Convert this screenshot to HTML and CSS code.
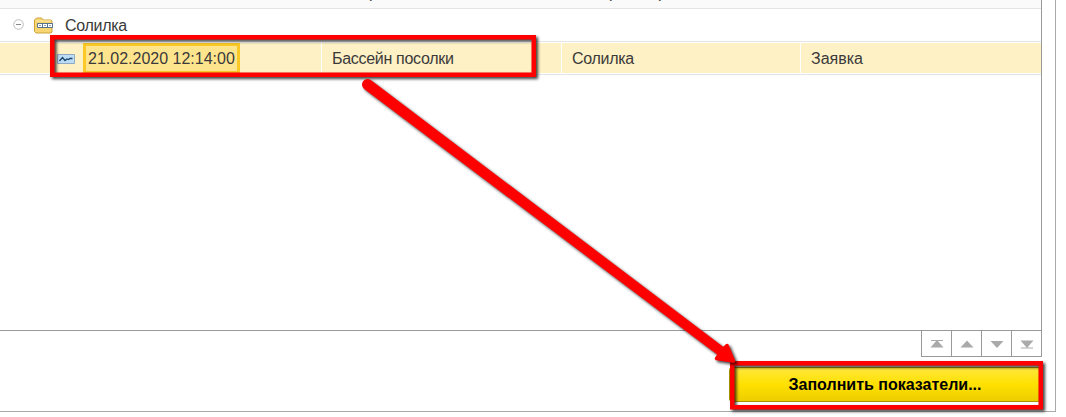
FILE: index.html
```html
<!DOCTYPE html>
<html lang="ru">
<head>
<meta charset="utf-8">
<title>Показатели</title>
<link rel="stylesheet" href="styles.css">
</head>
<body>
<div class="window">
  <div class="table">
    <div class="header"><span></span><span class="h1">р</span><span class="h2">р<i></i>р</span><span></span></div>
    <div class="group">
      <svg class="minus" width="11" height="11" viewBox="0 0 11 11"><circle cx="5.5" cy="5.5" r="4.8" fill="#fff" stroke="#bbb"/><path d="M3 5.500h5" stroke="#888"/></svg>
      <svg class="folder" width="20" height="17" viewBox="0 0 20 17"><path d="M.5 14.500V3L2.500 1h5l2 2h7.500l1 1v11l-1 1H2z" fill="#f7d573" stroke="#cda23c"/><path d="M2 4h15" stroke="#ffeaa6"/><path d="M3.500 6.500h15v4h-15z" fill="#fff" stroke="#55718b"/><path d="M8.500 6.500v4m5-4v4" stroke="#55718b"/><path d="M5 8.500h2m3 0h2m3 0h2" stroke="#8aa0b5"/></svg>
      <span class="tight">Солилка</span>
    </div>
    <div class="row">
      <div class="cell first">
        <svg width="18" height="10" viewBox="0 0 18 10"><path d="M.5.5h17v9H.5z" fill="#bddcf5" stroke="#8fa9c2"/><path d="M2.500 7L5.500 3.500 8 6.500l2-1.500 1.500 .5L13 4.500h2.500" fill="none" stroke="#17456f" stroke-width="1.300"/></svg>
        <span class="date">21.02.2020 12:14:00</span>
      </div>
      <div class="cell tight">Бассейн посолки</div>
      <div class="cell tight">Солилка</div>
      <div class="cell">Заявка</div>
    </div>
  </div>
  <div class="nav">
    <span><svg width="14" height="10" viewBox="0 0 14 10"><path d="M1 1.500h12" stroke="#aaa"/><path d="M7 1l6.500 7.500H.5z" fill="#aaa"/></svg></span>
    <span><svg width="14" height="10" viewBox="0 0 14 10"><path d="M7 1.500L13.500 8.500H.5z" fill="#aaa"/></svg></span>
    <span><svg width="14" height="10" viewBox="0 0 14 10"><path d="M.5 2h13L7 9z" fill="#aaa"/></svg></span>
    <span><svg width="14" height="10" viewBox="0 0 14 10"><path d="M.5 1.500h13L7 9z" fill="#aaa"/><path d="M1 9h12" stroke="#aaa"/></svg></span>
  </div>
  <div class="action">Заполнить показатели...</div>
</div>
<svg class="marks" width="1066" height="417" viewBox="0 0 1066 417">
  <g class="shadow" fill="none" stroke="#f00">
    <rect x="52.250" y="37.250" width="481.500" height="37.500" stroke-width="4.500"/>
    <rect x="732.250" y="363.250" width="308.500" height="44" stroke-width="4.500"/>
  </g>
  <g class="shadow" fill="#f00">
    <path d="M370.800 80.100L723.500 347 717.800 355 364.200 88.900A5.500 5.500 0 0 1 370.800 80.100z"/>
    <path d="M733.500 361L727 345.500 724 348.500 719 355 716.500 358.500z" stroke="#f00" stroke-width="3.500" stroke-linejoin="round"/>
  </g>
</svg>
</body>
</html>
```
FILE: styles.css
```css
body {
  margin: 0;
  height: 417px;
  overflow: hidden;
  background: #fff;
  color: #3a3a3a;
  font: 16px "Liberation Sans", Arial, sans-serif;
}
.window {
  box-sizing: border-box;
  width: 1056px;
  height: 412px;
  border-right: 1px solid #aaa;
  border-bottom: 1px solid #aaa;
}
.table {
  box-sizing: border-box;
  width: 1042px;
  height: 331px;
  border-right: 1px solid #999;
  border-bottom: 1px solid #999;
}
.header, .row {
  display: grid;
  grid-template-columns: 321px 240px 239px 1fr;
}
.header {
  height: 8px;
  overflow: hidden;
  background: #fafafa;
  border-bottom: 1px solid #e5e5e5;
  line-height: 18px;
}
.header span {
  margin-top: -16px;
}
.h1, .h2 {
  padding-left: 48px;
}
.h2 i {
  display: inline-block;
  width: 40px;
}
.group {
  display: flex;
  box-sizing: border-box;
  align-items: center;
  height: 33px;
  padding: 1px 0 0 13px;
  border-bottom: 1px solid #e5e5e5;
}
.minus {
  margin: -2px 10px 0 0;
}
.folder {
  margin-right: 11px;
}
.tight {
  letter-spacing: -.3px;
}
.row {
  height: 30px;
  padding: 1px 0;
  border-bottom: 1px solid #e5e5e5;
}
.cell {
  display: flex;
  box-sizing: border-box;
  height: 30px;
  align-items: center;
  padding: 1px 0 0 10px;
  background: #fef1c6;
  border-left: 1px solid #fff;
}
.cell.first {
  padding-left: 57px;
  border-left: 0;
}
.date {
  box-sizing: border-box;
  width: 157px;
  height: 31px;
  margin-left: 8px;
  padding-left: 2px;
  border: 3px solid #fbc926;
  background: #ffe48e;
  line-height: 25px;
  white-space: nowrap;
}
.nav {
  display: flex;
  width: 121px;
  margin: -1px 0 0 921px;
}
.nav span {
  display: flex;
  box-sizing: border-box;
  width: 30px;
  height: 27px;
  align-items: center;
  justify-content: center;
  border: 1px solid #999;
  border-right: 0;
}
.nav span:last-child {
  width: 31px;
  border-right: 1px solid #999;
}
.action {
  box-sizing: border-box;
  width: 312px;
  height: 35px;
  margin: 10px 0 0 729px;
  border: 1px solid #a99400;
  border-radius: 3px;
  background: linear-gradient(#ffe83c, #ffe000 50%, #ecce00);
  color: #000;
  font-weight: bold;
  line-height: 33px;
  text-align: center;
}
.marks {
  position: absolute;
  top: 0;
  left: 0;
}
.shadow {
  filter: drop-shadow(2px 2px 1.5px rgba(0, 0, 0, .75));
}
```
